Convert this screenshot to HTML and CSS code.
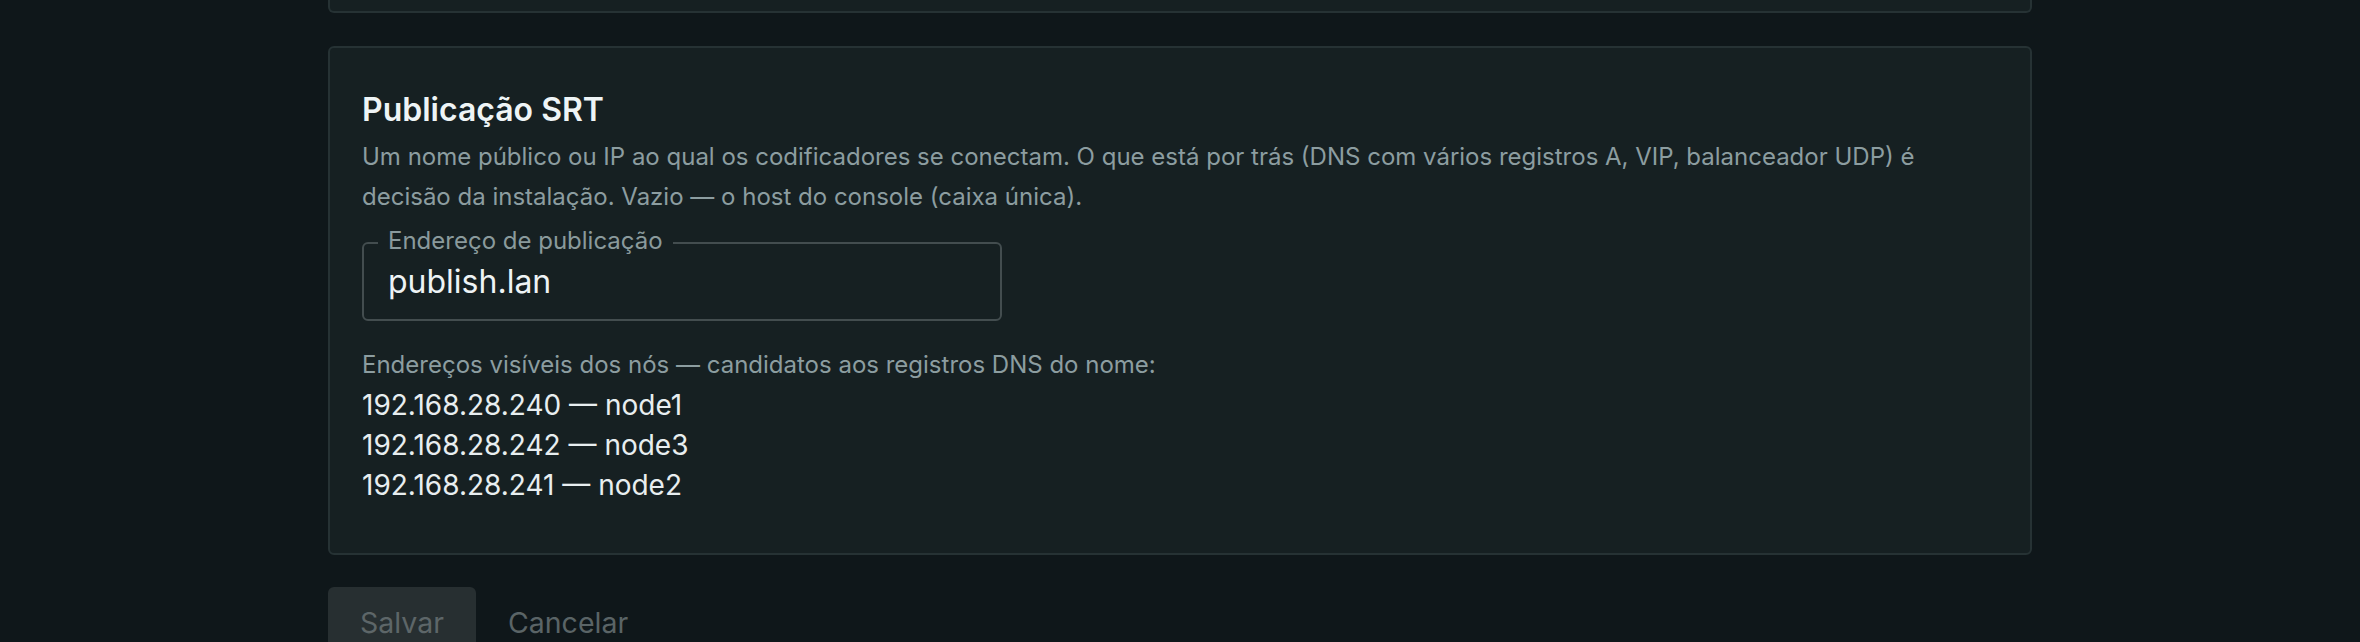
FILE: index.html
```html
<!DOCTYPE html>
<html lang="pt-BR">
<head>
<meta charset="utf-8">
<title>Publicação SRT</title>
<link rel="stylesheet" href="styles.css">
</head>
<body>
<main class="page">
  <section class="card card-prev"></section>
  <section class="card">
    <h2 class="card-title">Publicação SRT</h2>
    <p class="card-desc">Um nome público ou IP ao qual os codificadores se conectam. O que está por trás (DNS com vários registros A, VIP, balanceador UDP) é decisão da instalação. Vazio — o host do console (caixa única).</p>
    <fieldset class="field">
      <legend class="field-label">Endereço de publicação</legend>
      <input class="field-input" type="text" value="publish.lan">
    </fieldset>
    <p class="hint">Endereços visíveis dos nós — candidatos aos registros DNS do nome:</p>
    <ul class="nodes">
      <li>192.168.28.240 — node1</li>
      <li>192.168.28.242 — node3</li>
      <li>192.168.28.241 — node2</li>
    </ul>
  </section>
  <div class="actions">
    <button class="btn btn-primary" disabled>Salvar</button>
    <button class="btn btn-text" disabled>Cancelar</button>
  </div>
</main>
</body>
</html>
```
FILE: styles.css
```css
html, body {
  margin: 0;
  padding: 0;
  background: #0f171a;
  height: 100%;
  overflow: hidden;
}
body {
  font-family: Inter, "Noto Sans", sans-serif;
  color: #e8eef0;
}
.page {
  width: 1704px;
  margin: 0 auto;
}
.card {
  box-sizing: border-box;
  background: #162022;
  border: 2px solid #263234;
  border-radius: 6px;
  margin-top: 33px;
  padding: 44px 32px 48px;
}
.card-prev {
  margin-top: 0;
  height: 13px;
  padding: 0;
  border-top: none;
  border-radius: 0 0 6px 6px;
}
.card-title {
  margin: 0 0 9px;
  font-size: 32px;
  line-height: 36px;
  font-weight: 600;
  color: #eef4f6;
}
.card-desc {
  margin: 0;
  max-width: 1600px;
  font-size: 24px;
  line-height: 40px;
  color: #8c9da0;
}
.field {
  margin: 13px 0 0;
  width: 640px;
  box-sizing: border-box;
  border: 2px solid #434d4f;
  border-radius: 6px;
  padding: 8px 24px 19px;
}
.field-label {
  margin-left: -10px;
  padding: 0 10px 5px;
  font-size: 24px;
  line-height: 21px;
  color: #8a9a9c;
}
.field-input {
  display: block;
  width: 100%;
  box-sizing: border-box;
  margin: 0;
  padding: 0;
  border: none;
  outline: none;
  background: transparent;
  font-family: inherit;
  font-size: 32px;
  line-height: 36px;
  height: 36px;
  color: #eef3f5;
}
.hint {
  margin: 24px 0 0;
  font-size: 24px;
  line-height: 40px;
  color: #8c9da0;
}
.nodes {
  list-style: none;
  margin: 0;
  padding: 0;
  font-size: 28px;
  line-height: 40px;
  color: #e8eef0;
}
.actions {
  display: flex;
  margin-top: 32px;
}
.btn {
  font-family: inherit;
  font-size: 28.5px;
  line-height: 36px;
  padding: 18px 32px;
  border: none;
  border-radius: 6px;
  cursor: default;
}
.btn-primary {
  background: #272f31;
  color: #5d6668;
}
.btn-text {
  background: transparent;
  color: #5a6466;
}
```
